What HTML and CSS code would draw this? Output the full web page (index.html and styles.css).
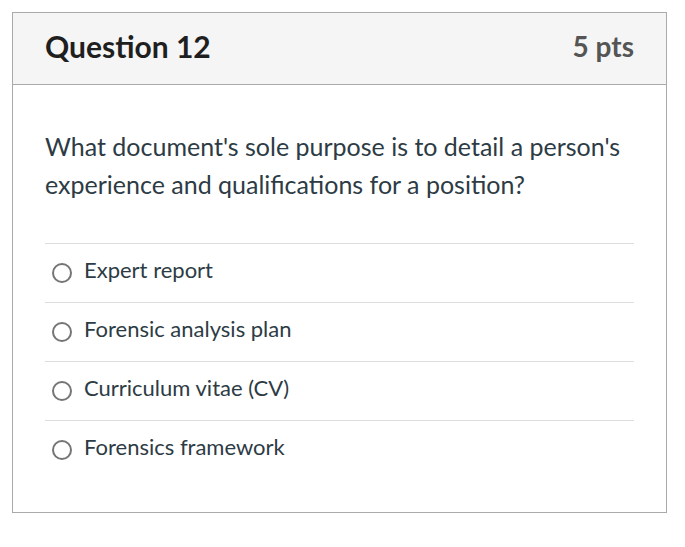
FILE: index.html
```html
<!DOCTYPE html>
<html>
<head>
<meta charset="utf-8">
<link rel="stylesheet" href="styles.css">
</head>
<body>
<div class="card">
  <div class="header">
    <h2 class="title">Question 12</h2>
    <span class="pts">5 pts</span>
  </div>
  <div class="body">
    <p class="question">What document's sole purpose is to detail a person's experience and qualifications for a position?</p>
    <div class="answers">
      <label class="answer"><span class="radio"></span><span>Expert report</span></label>
      <label class="answer"><span class="radio"></span><span>Forensic analysis plan</span></label>
      <label class="answer"><span class="radio"></span><span>Curriculum vitae (CV)</span></label>
      <label class="answer"><span class="radio"></span><span>Forensics framework</span></label>
    </div>
  </div>
</div>
</body>
</html>
```
FILE: styles.css
```css
* { box-sizing: border-box; }
body {
  margin: 0;
  padding: 12px;
  background: #fff;
  font-family: Lato, "Open Sans", sans-serif;
  color: #2d3b45;
}
.card {
  width: 655px;
  height: 501px;
  border: 1px solid #aaaaaa;
  background: #fff;
}
.header {
  height: 72px;
  background: #f5f5f5;
  border-bottom: 1px solid #aaaaaa;
  display: flex;
  align-items: center;
  justify-content: space-between;
  padding: 0 32px 6px;
}
.title {
  margin: 0;
  font-size: 30px;
  font-weight: 700;
  color: #1f1f1f;
}
.pts {
  font-size: 28px;
  font-weight: 700;
  color: #555;
}
.body {
  padding: 0 32px;
}
.question {
  margin: 42px 0 40px;
  font-size: 25px;
  line-height: 38px;
  color: #2d3b45;
}
.answer {
  display: flex;
  align-items: center;
  height: 59px;
  padding-bottom: 8px;
  border-top: 1px solid #dddddd;
  font-size: 22px;
  color: #2d3b45;
}
.answer:last-child { height: 60px; }
.radio {
  width: 20px;
  height: 20px;
  border: 2px solid #757575;
  border-radius: 50%;
  margin: 7px 12px 0 7px;
  flex: none;
}
```
